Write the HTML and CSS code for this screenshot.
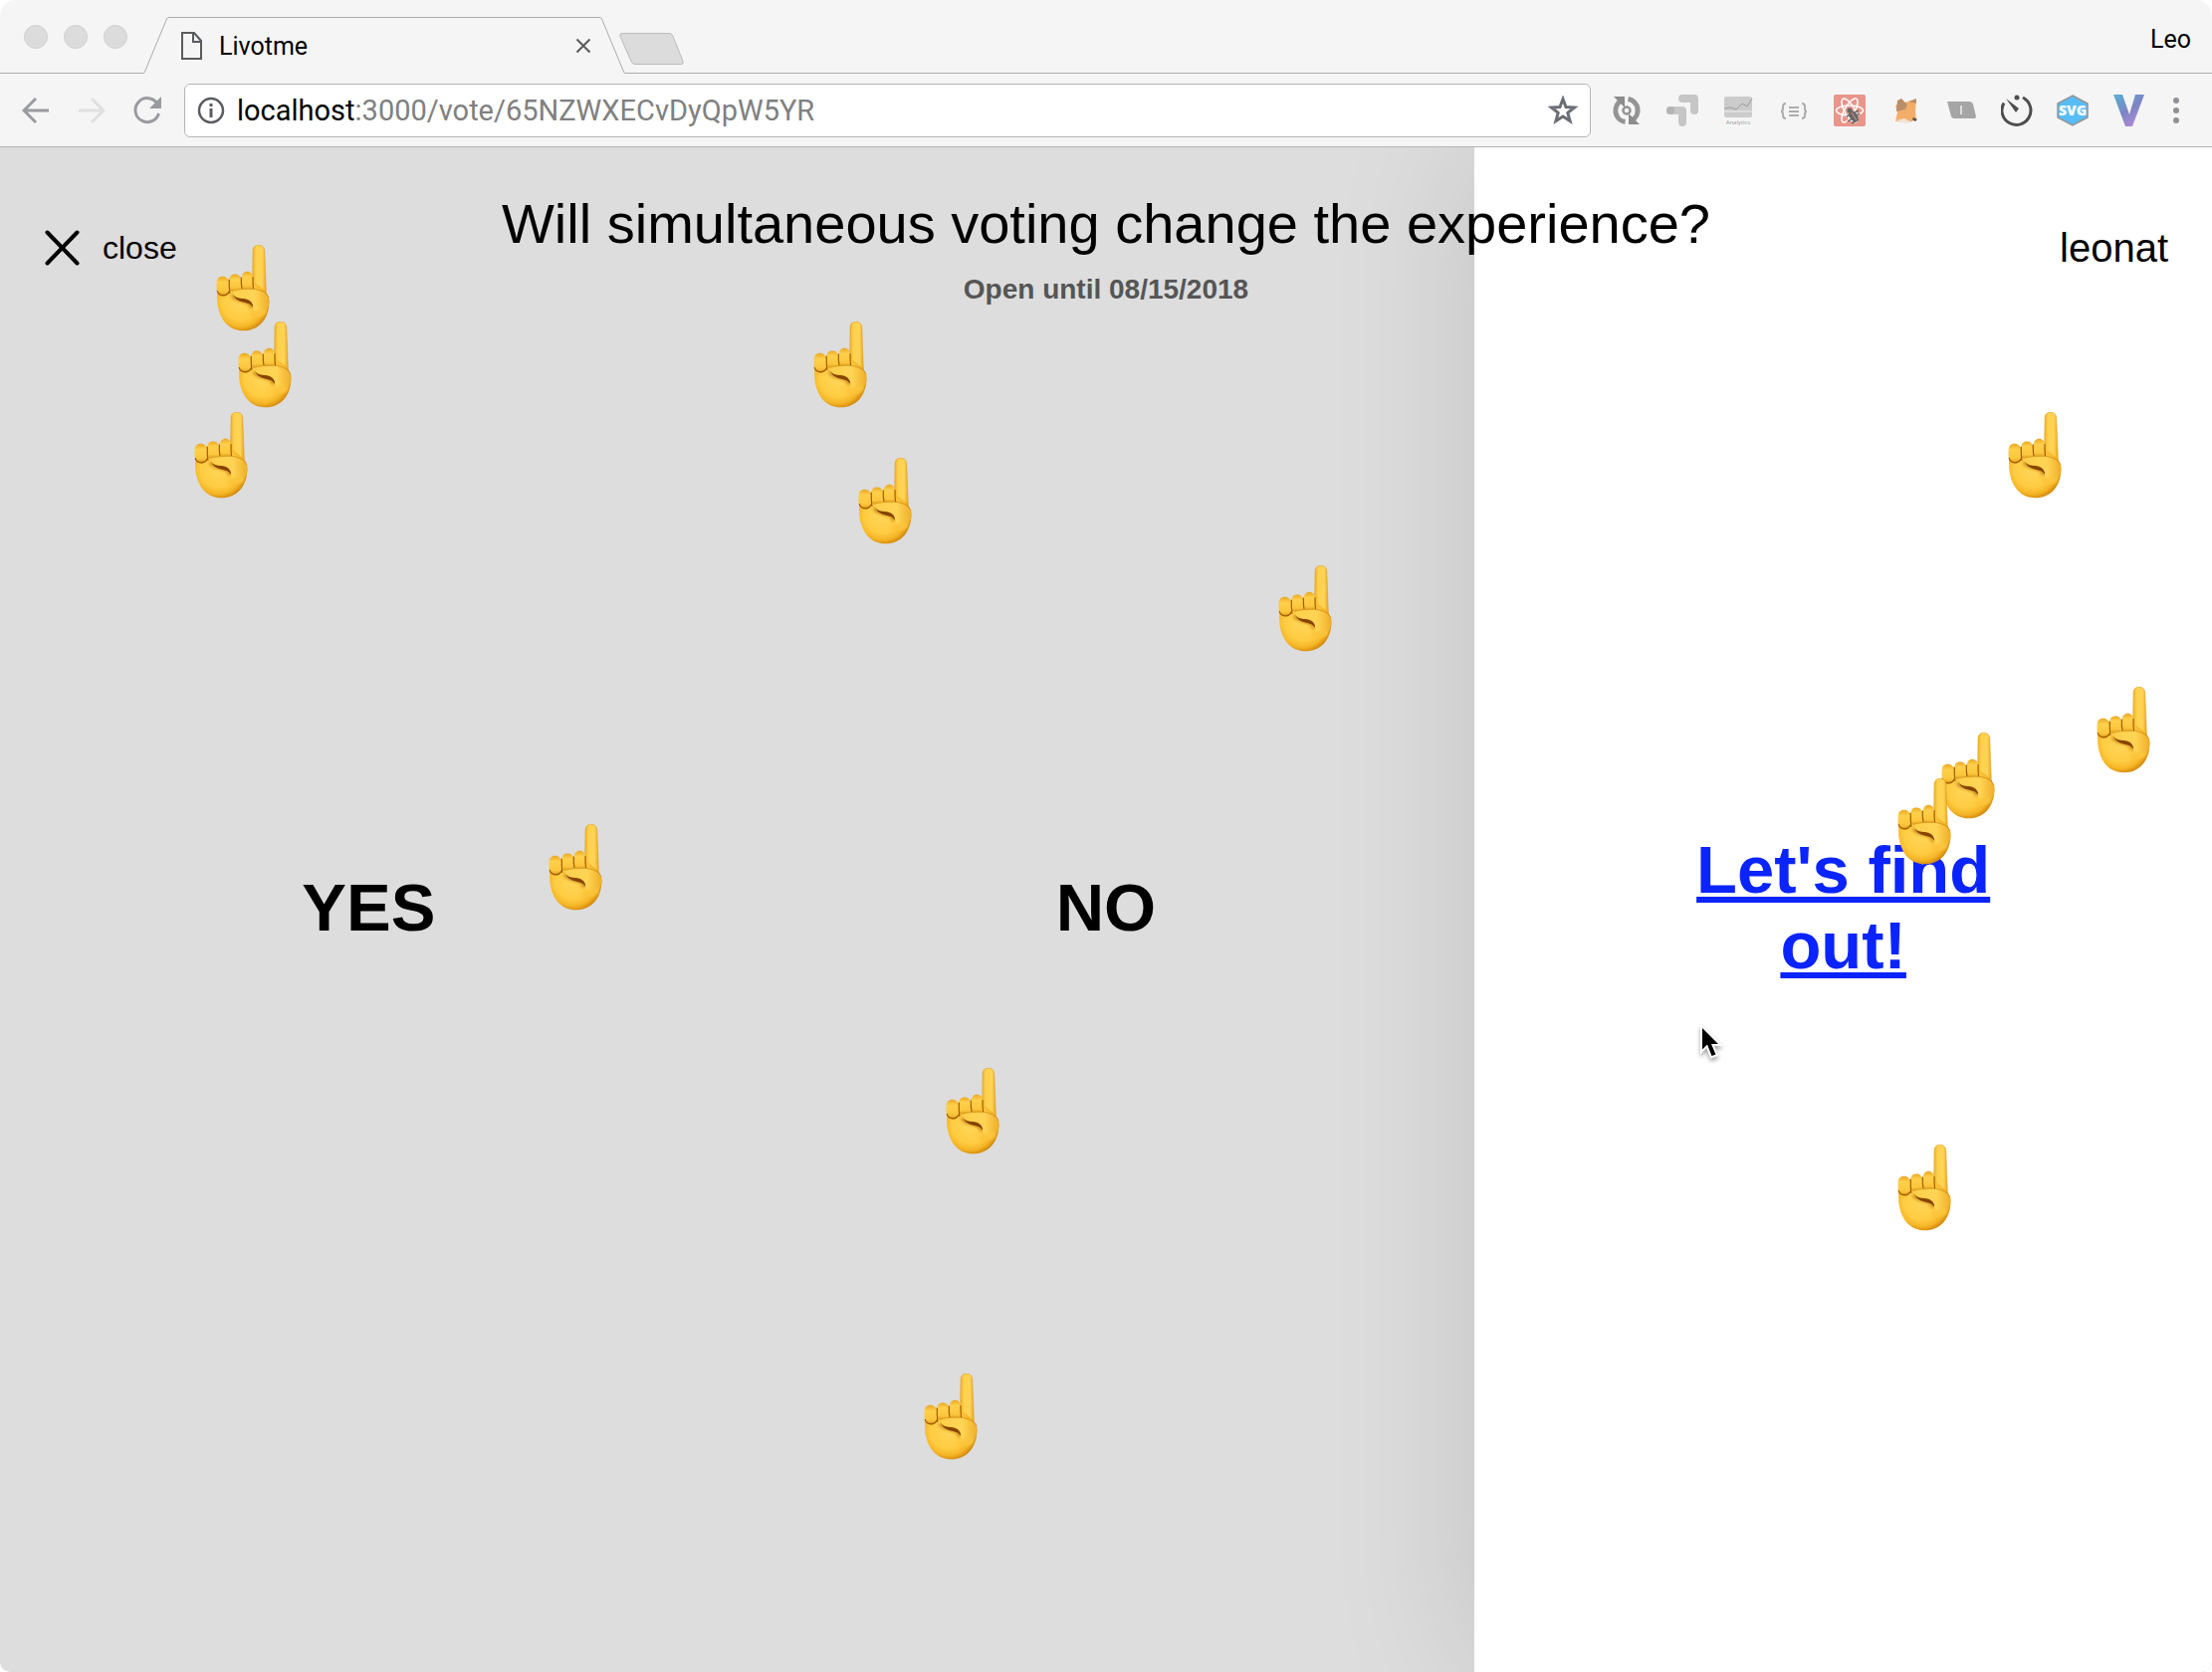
FILE: index.html
```
<!DOCTYPE html>
<html lang="en">
<head>
<meta charset="utf-8">
<title>Livotme</title>
<link rel="stylesheet" href="styles.css">
</head>
<body>
<svg class="defs" aria-hidden="true">
  <defs>
    <linearGradient id="finger-fill" x1="0" x2="1" y1="0" y2="0">
      <stop offset="0" stop-color="#eeb022"/><stop offset=".3" stop-color="#ffd150"/><stop offset=".7" stop-color="#ffd355"/><stop offset="1" stop-color="#e9a41e"/>
    </linearGradient>
    <radialGradient id="palm-fill" cx=".45" cy=".45" r=".58">
      <stop offset="0" stop-color="#ffd65a"/><stop offset=".6" stop-color="#ffcc42"/><stop offset=".82" stop-color="#f5b526"/><stop offset="1" stop-color="#cf8208"/>
    </radialGradient>
    <linearGradient id="knuckle-fill" x1="0" x2="0" y1="0" y2="1">
      <stop offset="0" stop-color="#eba822"/><stop offset=".3" stop-color="#ffd04c"/><stop offset=".75" stop-color="#fbc63c"/><stop offset="1" stop-color="#dd9a18"/>
    </linearGradient>
    <linearGradient id="thumb-fill" x1="0" x2="1" y1="0" y2="0">
      <stop offset="0" stop-color="#ffcf4b"/><stop offset=".6" stop-color="#ffd455"/><stop offset="1" stop-color="#eeae28"/>
    </linearGradient>
    <filter id="soft"><feGaussianBlur stdDeviation="1.5"/></filter>
    <filter id="softer" x="-.3" y="-.5" width="1.600" height="2"><feGaussianBlur stdDeviation="4"/></filter>
    <linearGradient id="vue-fill" x1="0" y1="0" x2=".7" y2="1">
      <stop offset="0" stop-color="#58b3d3"/><stop offset=".55" stop-color="#7c84c4"/><stop offset="1" stop-color="#b48ad6"/>
    </linearGradient>
    <symbol id="hand" viewBox="0 0 160 260">
      <path d="M110 18c0-11 7-17 17-17s18 6 18 17l5 132-42 12z" fill="url(#finger-fill)" stroke="#d8981b" stroke-width="1.500"/>
      <path d="M2 120c10-16 90-30 106-14 18 22 51 28 51 66-1 54-34 86-77 86-46 0-74-36-79-86z" fill="url(#palm-fill)"/>
      <path d="M48 150c8 18 36 16 48 22 8 4 11 8 9 18" fill="none" stroke="#c07a10" stroke-width="11" filter="url(#softer)" opacity=".8"/>
      <path d="M1 115c0-13 7-20 18-20s19 8 19 20v22c0 11-7 17-17 17-14 0-20-10-20-20z" fill="url(#knuckle-fill)"/>
      <path d="M3 138c3 16 29 20 36 1" fill="none" stroke="#a96009" stroke-width="4" filter="url(#soft)"/>
      <path d="M39 106c0-12 7-18 17-18s18 6 18 17v28c-4 9-30 10-34 2z" fill="url(#knuckle-fill)"/>
      <path d="M76 99c0-12 8-19 17-19s17 7 17 18v36c-5 5-28 5-33-1z" fill="url(#knuckle-fill)"/>
      <path d="M39 104q-1 20 2 42M75 97q-1 18 2 35M110 96q-1 22 2 37" fill="none" stroke="#a05c08" stroke-width="3.500" filter="url(#soft)"/>
      <path d="M52 150c8 12 32 9 44 13 10 4 15 12 14 24-5-8-12-12-24-14-14-3-29-8-34-23z" fill="#874404" filter="url(#soft)"/>
      <path d="M51 145c-1-7 3-11 10-11 16-1 34-2 47-1 28 3 46 14 51 30 1 18-4 30-12 42-14 6-26 2-36-10 2-16-6-30-24-33-14-2-33 0-36-17z" fill="url(#thumb-fill)" filter="url(#soft)"/>
      <path d="M52 137c16-4 38-5 56-5 28 3 44 12 50 27" fill="none" stroke="#c98412" stroke-width="2" filter="url(#soft)"/>
      <path d="M102 208c14 4 30 0 42-10" fill="none" stroke="#fbc43a" stroke-width="20" filter="url(#softer)"/>
    </symbol>
  </defs>
</svg>

<div class="browser">
  <header class="chrome">
    <div class="tab-strip">
      <div class="lights"><span class="light"></span><span class="light"></span><span class="light"></span></div>
      <div class="tab">
        <svg class="tab-edge" viewBox="0 0 26 57" width="26" height="57"><path d="M0 56.500Q1 56.500 1.500 55L23.500 2Q24 .5 26 .5" fill="none" stroke="#ababab"/></svg>
        <div class="tab-body">
          <svg width="22" height="40" viewBox="0 0 22 40" fill="none" stroke="#5a5b5e" stroke-width="2"><path d="M1 7h12l7 8v18H1zM12 7v9h8"/></svg>
          <span class="tab-title">Livotme</span>
          <button class="plain tab-close" aria-label="Close tab"><svg width="16" height="16" viewBox="0 0 16 16" stroke="#5a5b5e" stroke-width="2"><path d="M1.500 1.500l13 13M14.500 1.500l-13 13"/></svg></button>
        </div>
        <svg class="tab-edge" viewBox="0 0 26 57" width="26" height="57"><path d="M26 56.500Q25 56.500 24.500 55L2.500 2Q2 .5 0 .5" fill="none" stroke="#ababab"/></svg>
      </div>
      <button class="plain new-tab" aria-label="New tab"><svg width="66" height="33" viewBox="0 0 66 33"><path d="M3 .5h47q3 0 4 3l10 25q1 3-2 3H16q-3 0-4-3L1 3.500Q0 .5 3 .5z" fill="#dcdcdc" stroke="#bbb"/></svg></button>
      <span class="profile">Leo</span>
    </div>
    <div class="toolbar">
      <div class="nav">
        <button class="plain" aria-label="Back"><svg width="28" height="28" viewBox="0 0 28 28" fill="none" stroke="#9a9b9f" stroke-width="3"><path d="M27 14H3M14 2L2 14l12 12"/></svg></button>
        <button class="plain" aria-label="Forward"><svg width="28" height="28" viewBox="0 0 28 28" fill="none" stroke="#e0e0e1" stroke-width="3"><path d="M1 14h24M14 2l12 12-12 12"/></svg></button>
        <button class="plain" aria-label="Reload"><svg width="28" height="28" viewBox="0 0 28 28"><path d="M24 7A12 12 0 1 0 25.500 17" fill="none" stroke="#9a9b9f" stroke-width="3"/><path d="M28 0v12H16z" fill="#9a9b9f"/></svg></button>
      </div>
      <div class="omnibox">
        <svg width="28" height="28" viewBox="0 0 28 28"><circle cx="14" cy="14" r="12" fill="none" stroke="#5a5c61" stroke-width="2.500"/><path d="M14 7v3M14 12v9" stroke="#5a5c61" stroke-width="3"/></svg>
        <span class="url"><b>localhost</b>:3000/vote/65NZWXECvDyQpW5YR</span>
        <button class="plain" aria-label="Bookmark this page"><svg width="30" height="30" viewBox="0 0 30 30"><path d="M15 3.500l3 8 8.500.5-6.700 5.300 2.300 8.300L15 21l-7.100 4.600 2.300-8.300L3.500 12l8.500-.5z" fill="none" stroke="#6b6e76" stroke-width="3"/></svg></button>
      </div>
      <div class="extensions">
        <svg width="32" height="32" viewBox="0 0 32 32"><path d="M12 5.500A11.500 11.500 0 0 0 14.500 27.500M17.500 4.500A11.500 11.500 0 0 1 21 26" fill="none" stroke="#949494" stroke-width="5"/><path d="M3 2h11v11zM29 30H18V19z" fill="#8c8c8c"/><circle cx="16" cy="16" r="3.500" fill="none" stroke="#949494" stroke-width="2.500"/></svg>
        <svg width="32" height="32" viewBox="0 0 32 32" fill="none" stroke="#c6c6c6" stroke-width="8" stroke-linecap="round" stroke-linejoin="round"><path d="M16 4h12v12M4 16h12v12"/><circle cx="4" cy="16" r="4" fill="#b4b4b4" stroke="none"/></svg>
        <svg width="32" height="32" viewBox="0 0 32 32"><rect x="2" y="2" width="28" height="21" rx="2" fill="#cbcbcb"/><path d="M2 14l6-1 6 2 6-6 5 3 5-8" fill="none" stroke="#9d9d9d"/><path d="M2 17h28" stroke="#eee"/><text x="16" y="30" class="icon-caption">Analytics</text></svg>
        <svg width="32" height="32" viewBox="0 0 32 32" fill="none" stroke="#adadad" stroke-width="2"><path d="M8 9q-3 0-3 3v2q0 3-2 3 2 0 2 3v1q0 3 3 3M24 9q3 0 3 3v2q0 3 2 3-2 0-2 3v1q0 3-3 3M11 13h10M11 17h10M11 21h10"/></svg>
        <svg width="32" height="32" viewBox="0 0 32 32"><rect width="32" height="32" rx="2" fill="#e8958a"/><g fill="none" stroke="#fff" stroke-width="1.500"><ellipse cx="16" cy="16" rx="13.500" ry="5"/><ellipse cx="16" cy="16" rx="13.500" ry="5" transform="rotate(60 16 16)"/><ellipse cx="16" cy="16" rx="13.500" ry="5" transform="rotate(120 16 16)"/></g><circle cx="16" cy="16" r="2.500" fill="#666"/><ellipse cx="20" cy="22" rx="4" ry="6" transform="rotate(-35 20 22)" fill="#666"/><path d="M13 22l12-6M14 27l12-8M18 29l7-4" stroke="#666" stroke-width="1.500"/><path d="M18 18l5 8" stroke="#e8958a"/></svg>
        <svg width="32" height="32" viewBox="0 0 32 32"><path d="M6 11l9-3 12-3-1 12 1 8-7 3-14-1 2-9z" fill="#f3ad69"/><path d="M7 14L8 6l4-2 6 6-2 5-9 2zM19 7l8-3v5z" fill="#b98f69"/><path d="M6 26l9-2 8 4-6 1z" fill="#eee2d4"/><path d="M24 23l4 2-2 2-3-2z" fill="#555"/></svg>
        <svg width="32" height="32" viewBox="0 0 32 32"><path d="M2 7h22q3 0 4 3l3 12q0 2-2 2H9q-2 0-3-2z" fill="#a5a5a5"/><path d="M16 11v9" stroke="#ddd" stroke-width="2"/></svg>
        <svg width="32" height="32" viewBox="0 0 32 32" fill="none" stroke="#4e4e4e" stroke-width="3"><path d="M3 8.500A14.500 14.500 0 1 0 22 3"/><path d="M5 4l13 10-3 4z" fill="#4e4e4e" stroke="none"/><circle cx="16" cy="3" r="2.500" fill="#4e4e4e" stroke="none"/></svg>
        <svg width="32" height="32" viewBox="0 0 32 32"><path d="M16 1l15 8v14l-15 8-15-8V9z" fill="#58bdf5" stroke="#959595" stroke-width="1.500"/><text x="16" y="21" class="icon-svg">SVG</text></svg>
        <svg width="32" height="32" viewBox="0 0 32 32"><path d="M1 0h9l7 20L23 0h9L20 32h-7z" fill="url(#vue-fill)"/></svg>
        <button class="plain menu" aria-label="Menu"><svg width="6" height="26" viewBox="0 0 6 26" fill="#8f9195"><circle cx="3" cy="3" r="3"/><circle cx="3" cy="13" r="3"/><circle cx="3" cy="23" r="3"/></svg></button>
      </div>
    </div>
  </header>

  <main class="vote">
    <div class="options">
      <button class="option">YES</button>
      <button class="option">NO</button>
      <div class="option option-active"><a href="#results">Let's find out!</a></div>
    </div>
    <div class="vote-head">
      <button class="plain close"><svg width="36" height="36" viewBox="0 0 36 36" stroke="#000" stroke-width="4" stroke-linecap="round"><path d="M3.500 2.500l30 31M33.500 2.500l-30 31"/></svg>close</button>
      <div class="question">
        <h1>Will simultaneous voting change the experience?</h1>
        <p>Open until 08/15/2018</p>
      </div>
      <span class="user">leonat</span>
    </div>
    <svg class="pin" style="left:10%;top:6%"><use href="#hand"/></svg>
    <svg class="pin" style="left:11%;top:11%"><use href="#hand"/></svg>
    <svg class="pin" style="left:9%;top:17%"><use href="#hand"/></svg>
    <svg class="pin" style="left:37%;top:11%"><use href="#hand"/></svg>
    <svg class="pin" style="left:39%;top:20%"><use href="#hand"/></svg>
    <svg class="pin" style="left:58%;top:27%"><use href="#hand"/></svg>
    <svg class="pin" style="left:25%;top:44%"><use href="#hand"/></svg>
    <svg class="pin" style="left:43%;top:60%"><use href="#hand"/></svg>
    <svg class="pin" style="left:42%;top:80%"><use href="#hand"/></svg>
    <svg class="pin" style="left:91%;top:17%"><use href="#hand"/></svg>
    <svg class="pin" style="left:95%;top:35%"><use href="#hand"/></svg>
    <svg class="pin" style="left:88%;top:38%"><use href="#hand"/></svg>
    <svg class="pin" style="left:86%;top:41%"><use href="#hand"/></svg>
    <svg class="pin" style="left:86%;top:65%"><use href="#hand"/></svg>
    <svg class="cursor" width="24" height="36" viewBox="-4 -4 24 36"><path d="M0 0v21.500l5-5L9.500 28l4-1.500L9 16h7z" fill="#000" stroke="#fff" stroke-width="4" paint-order="stroke"/></svg>
  </main>
</div>
</body>
</html>
```
FILE: styles.css
```
* { box-sizing: border-box; }

body {
  margin: 0;
  background: #fff;
  font-family: "Liberation Sans", Arial, sans-serif;
  color: #000;
}

.defs { position: absolute; width: 0; height: 0; }

.browser {
  display: flex;
  flex-direction: column;
  min-height: 100vh;
  border-radius: 16px 16px 10px 10px;
  overflow: hidden;
}

.plain {
  display: flex;
  padding: 0;
  border: 0;
  background: none;
  font: inherit;
  color: inherit;
}

svg { display: block; flex: none; }

/* Browser chrome */
.chrome {
  background: #f5f5f5;
  border-bottom: 1px solid #b4b4b4;
  font-family: Roboto, sans-serif;
}

.tab-strip {
  display: flex;
  align-items: flex-end;
  height: 74px;
  background: linear-gradient(#ababab, #ababab) bottom / 100% 1px no-repeat;
}

.lights {
  display: flex;
  gap: 16px;
  align-self: center;
  padding-left: 24px;
  width: 144px;
}

.light {
  width: 24px;
  height: 24px;
  border: 1px solid #d0d0d0;
  border-radius: 50%;
  background: #dcdcdc;
}

.tab { display: flex; width: 484px; background: #f5f5f5; }

.tab-body {
  display: flex;
  flex: 1;
  align-items: center;
  padding: 0 8px 0 12px;
  border-top: 1px solid #ababab;
}

.tab-title { flex: 1; padding-left: 16px; font-size: 25px; }

.new-tab { align-self: flex-end; margin: 0 0 8px -6px; }

.profile {
  align-self: center;
  margin-left: auto;
  padding: 4px 21px 0 0;
  font-size: 25px;
}

.toolbar {
  display: flex;
  align-items: center;
  height: 73px;
  padding: 0 33px 0 22px;
}

.nav { display: flex; gap: 28px; width: 163px; }

.omnibox {
  display: flex;
  flex: 1;
  align-items: center;
  height: 54px;
  padding: 0 12px;
  border: 1px solid #b4b4b4;
  border-radius: 6px;
  background: #fff;
}

.url { flex: 1; padding-left: 12px; font-size: 29px; color: #808080; }
.url b { font-weight: 400; color: #000; }

.extensions { display: flex; align-items: center; gap: 24px; padding-left: 20px; }
.menu { margin-left: 5px; }

.icon-caption { font: 6px "Open Sans", sans-serif; fill: #999; text-anchor: middle; }
.icon-svg { font: 800 14px "Open Sans", sans-serif; fill: #fff; text-anchor: middle; }

/* Vote page */
.vote {
  position: relative;
  display: grid;
  flex: 1;
  overflow: hidden;
  background: #ddd;
}

.options, .vote-head { grid-area: 1 / 1; }

.options { display: grid; grid-template-columns: repeat(3, 1fr); }

.option {
  display: flex;
  align-items: center;
  justify-content: center;
  padding: 0 200px 4px;
  border: 0;
  background: none;
  font: bold 67px/76px "Liberation Sans", Arial, sans-serif;
  color: #000;
  text-align: center;
}

.option-active {
  background: #fff;
  box-shadow: 0 0 140px rgba(0, 0, 0, .12);
}

.option-active a { color: #0b24fb; text-decoration-skip-ink: none; }

.vote-head {
  position: relative;
  display: grid;
  grid-template-columns: 1fr auto 1fr;
  align-self: start;
  padding: 44px 44px 0;
}

.close { align-items: center; gap: 23px; height: 114px; font-size: 32px; }

.question { text-align: center; }
.question h1 { margin: 0; font-size: 56px; font-weight: 400; line-height: 66px; }
.question p { margin: 16px 0 0; font-size: 28px; font-weight: 700; line-height: 34px; color: #555; }

.user { justify-self: end; font-size: 40px; line-height: 114px; }

/* Pins sit at percentages of the page; the margin keeps the hand on its point */
.pin {
  position: absolute;
  width: 54px;
  height: 87px;
  margin: 6px 0 0 -5px;
}

.cursor {
  position: absolute;
  left: 1706px;
  top: 881px;
  filter: drop-shadow(0 3px 2px rgba(0, 0, 0, .35));
}
```
